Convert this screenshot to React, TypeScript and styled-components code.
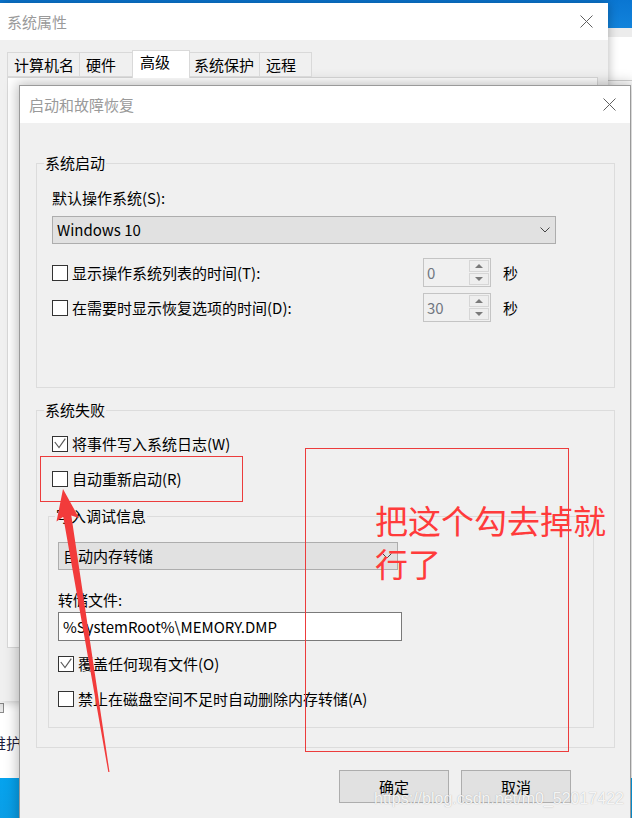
import React from "react";
import styled, { createGlobalStyle } from "styled-components";

const FONT = `"Noto Sans CJK SC", "Noto Sans", sans-serif`;

const GlobalStyle = createGlobalStyle`
  html, body { margin: 0; padding: 0; }
  body {
    width: 632px;
    height: 818px;
    overflow: hidden;
    background: #ffffff;
    font-family: ${FONT};
    color: #000;
  }
  * { box-sizing: border-box; }
`;

/* ---------- desktop ---------- */
const Desktop = styled.div`
  position: relative;
  width: 632px;
  height: 818px;
  overflow: hidden;
  display: flex;
  flex-direction: column;
  font-family: ${FONT};
`;
const TopBand = styled.div`
  height: 28px;
  background: linear-gradient(180deg, #0a76d2, #1283db);
`;
const DesktopMiddle = styled.div`
  flex: 1;
  background: #ffffff;
`;
const Taskbar = styled.div`
  height: 40px;
  background: linear-gradient(180deg, #05a3ee, #0b9ee6);
`;
const BackWindowRight = styled.div`
  position: absolute;
  left: 600px;
  top: 28px;
  width: 80px;
  height: 750px;
  background: #ffffff;
  border-top: 9px solid #ececec;
`;
const BackRule = styled.div`
  margin-top: 43px;
  height: 1px;
  background: #d2d2d2;
`;
const BackWindowLeft = styled.div`
  position: absolute;
  left: -60px;
  top: 701px;
  width: 300px;
  height: 77px;
  background: #ffffff;
  display: flex;
  flex-direction: column;
  padding-left: 6px;
`;
const BackIcon = styled.div`
  margin: 2px 0 0 46px;
  width: 12px;
  height: 10px;
  border: 1px solid #8a8a8a;
  background: #e8e8e8;
`;
const BackText = styled.div`
  margin-top: 20px;
  font-size: 15px;
  line-height: 20px;
  color: #1c1c3c;
`;

/* ---------- outer window ---------- */
const OuterWindow = styled.div`
  position: absolute;
  left: 0;
  top: 3px;
  width: 608px;
  height: 698px;
  background: #f0f0f0;
  box-shadow: 0 0 10px rgba(0, 0, 0, 0.3);
  display: flex;
  flex-direction: column;
`;
const TitleBar = styled.div<{ $pl: number }>`
  height: 37px;
  flex: none;
  background: #ffffff;
  display: flex;
  align-items: center;
  justify-content: space-between;
  padding-left: ${(p) => p.$pl}px;
`;
const TitleText = styled.span`
  font-size: 15px;
  line-height: 20px;
  color: #9a9a9a;
`;
const CloseBox = styled.span<{ $mr: number }>`
  display: flex;
  margin-right: ${(p) => p.$mr}px;
`;
const OuterBody = styled.div`
  padding: 10px 0 0 7px;
`;
const TabStrip = styled.div`
  height: 28px;
  display: flex;
  align-items: flex-end;
  position: relative;
  z-index: 1;
`;
const Tab = styled.div<{ $w: number; $pl: number; $active?: boolean }>`
  width: ${(p) => p.$w}px;
  height: ${(p) => (p.$active ? 28 : 25)}px;
  margin-bottom: ${(p) => (p.$active ? 0 : 1)}px;
  margin-left: -1px;
  &:first-child { margin-left: 0; }
  border: 1px solid #d9d9d9;
  border-bottom: ${(p) => (p.$active ? "none" : "1px solid #d9d9d9")};
  background: ${(p) => (p.$active ? "#ffffff" : "#f0f0f0")};
  position: relative;
  z-index: ${(p) => (p.$active ? 2 : 1)};
  padding-left: ${(p) => p.$pl - 1}px;
  padding-top: ${(p) => (p.$active ? 1 : 2)}px;
  font-size: 15px;
  line-height: 20px;
  white-space: nowrap;
`;
const TabPanel = styled.div`
  margin-top: -1px;
  width: 591px;
  height: 571px;
  background: #ffffff;
  border: 1px solid #d9d9d9;
`;

/* ---------- inner dialog ---------- */
const InnerDialog = styled.div`
  position: absolute;
  left: 19px;
  top: 85px;
  width: 612px;
  height: 760px;
  background: #f0f0f0;
  border: 1px solid #9a9a9a;
  box-shadow: 0 0 12px 2px rgba(0, 0, 0, 0.25);
  display: flex;
  flex-direction: column;
`;
const DialogBody = styled.div`
  padding: 30px 15px 0 16px;
  display: flex;
  flex-direction: column;
`;
const Group = styled.fieldset<{ $mt: number; $pb: number }>`
  margin: ${(p) => p.$mt}px 0 0 0;
  padding: 0 15px ${(p) => p.$pb}px 15px;
  border: 1px solid #dcdcdc;
  min-width: 0;
`;
const SubGroup = styled.fieldset`
  margin: 15px 5px 0 -4px;
  padding: 0 9px 16px 9px;
  border: 1px solid #dcdcdc;
  min-width: 0;
`;
const Legend = styled.legend<{ $ml: number }>`
  margin-left: ${(p) => p.$ml}px;
  padding: 0 1px;
  font-size: 15px;
  line-height: 20px;
`;
const FieldLabel = styled.div<{ $mt: number }>`
  margin-top: ${(p) => p.$mt}px;
  font-size: 15px;
  line-height: 20px;
`;
const Combo = styled.div<{ $w: number; $mt: number }>`
  margin-top: ${(p) => p.$mt}px;
  width: ${(p) => p.$w}px;
  height: 28px;
  background: #e1e1e1;
  border: 1px solid #adadad;
  display: flex;
  align-items: center;
  justify-content: space-between;
  padding: 0 5px 0 4px;
  font-size: 15px;
  line-height: 20px;
`;
const TextInput = styled.div<{ $w: number }>`
  margin-top: 2px;
  width: ${(p) => p.$w}px;
  height: 29px;
  background: #ffffff;
  border: 1px solid #7a7a7a;
  display: flex;
  align-items: center;
  padding-left: 4px;
  font-size: 15px;
  line-height: 20px;
`;
const CheckRow = styled.div<{ $mt: number }>`
  margin-top: ${(p) => p.$mt}px;
  height: 24px;
  display: flex;
  align-items: center;
  gap: 4px;
  font-size: 15px;
  line-height: 20px;
  white-space: nowrap;
`;
const SpinRow = styled.div<{ $mt: number }>`
  margin-top: ${(p) => p.$mt}px;
  height: 29px;
  display: grid;
  grid-template-columns: 371px 68px auto;
  align-items: center;
`;
const Box = styled.span`
  width: 16px;
  height: 16px;
  flex: none;
  border: 1px solid #333333;
  background: #ffffff;
  display: flex;
`;
const Spin = styled.div`
  width: 68px;
  height: 29px;
  border: 1px solid #c4c4c4;
  background: #f0f0f0;
  display: flex;
`;
const SpinValue = styled.div`
  flex: 1;
  padding-left: 3px;
  font-size: 15px;
  line-height: 27px;
  color: #717780;
`;
const SpinButtons = styled.div`
  width: 21px;
  display: flex;
  flex-direction: column;
  gap: 1px;
  padding: 1px 1px 1px 0;
`;
const SpinButton = styled.div`
  flex: 1;
  border: 1px solid #d6d6d6;
  background: #eeeeee;
  display: flex;
  align-items: center;
  justify-content: center;
`;
const Unit = styled.span`
  margin-left: 12px;
  font-size: 15px;
  line-height: 20px;
`;
const ButtonRow = styled.div`
  margin: 22px 44px 0 0;
  display: flex;
  justify-content: flex-end;
  gap: 12px;
`;
const Button = styled.div`
  width: 110px;
  height: 33px;
  border: 1px solid #adadad;
  background: #e1e1e1;
  display: flex;
  align-items: center;
  justify-content: center;
  font-size: 15px;
  line-height: 20px;
`;

/* ---------- annotations ---------- */
const Overlay = styled.div`
  position: absolute;
  inset: 0;
  pointer-events: none;
  z-index: 10;
`;
const MarkLayer = styled.svg`
  position: absolute;
  left: 0;
  top: 0;
`;
const Note = styled.div`
  position: absolute;
  left: 375px;
  top: 499px;
  width: 250px;
  font-size: 33px;
  line-height: 43px;
  color: #ff3b3b;
  font-family: ${FONT};
`;
const Watermark = styled.div`
  position: absolute;
  left: 374px;
  top: 789px;
  font-family: "Liberation Sans", Arial, sans-serif;
  font-size: 16px;
  line-height: 20px;
  color: rgba(255, 255, 255, 0.9);
  text-shadow: 0 0 1px rgba(110, 110, 110, 0.55);
  white-space: nowrap;
`;

/* ---------- small drawings ---------- */
const CloseIcon = () => (
  <svg width="13" height="13" viewBox="0 0 13 13">
    <path d="M0.5 0.5L12.5 12.5M12.5 0.5L0.5 12.5" stroke="#606060" strokeWidth="1" />
  </svg>
);
const Chevron = () => (
  <svg width="10" height="6" viewBox="0 0 10 6">
    <polyline points="0.5,0.5 5,5 9.5,0.5" fill="none" stroke="#444" strokeWidth="1" />
  </svg>
);
const Tri = ({ up }: { up?: boolean }) => (
  <svg width="8" height="4" viewBox="0 0 8 4">
    <polygon points={up ? "0,4 8,4 4,0" : "0,0 8,0 4,4"} fill="#7a7a7a" />
  </svg>
);

const Check = ({ checked }: { checked?: boolean }) => (
  <Box>
    {checked && (
      <svg width="14" height="14" viewBox="0 0 14 14">
        <polyline points="1.8,5 6,10.6 12.3,1.6" fill="none" stroke="#5a5a5a" strokeWidth="1.2" />
      </svg>
    )}
  </Box>
);

const SpinBox = ({ value }: { value: string }) => (
  <Spin>
    <SpinValue>{value}</SpinValue>
    <SpinButtons>
      <SpinButton>
        <Tri up />
      </SpinButton>
      <SpinButton>
        <Tri />
      </SpinButton>
    </SpinButtons>
  </Spin>
);

const tabs = [
  { label: "计算机名", w: 73, pl: 7 },
  { label: "硬件", w: 54, pl: 7 },
  { label: "高级", w: 58, pl: 8, active: true },
  { label: "系统保护", w: 71, pl: 5 },
  { label: "远程", w: 53, pl: 7 },
];

export default function App() {
  return (
    <>
      <GlobalStyle />
      <Desktop>
        <TopBand />
        <DesktopMiddle />
        <Taskbar />

        <BackWindowRight>
          <BackRule />
        </BackWindowRight>
        <BackWindowLeft>
          <BackIcon />
          <BackText>安全和维护</BackText>
        </BackWindowLeft>

        <OuterWindow>
          <TitleBar $pl={7}>
            <TitleText>系统属性</TitleText>
            <CloseBox $mr={15}>
              <CloseIcon />
            </CloseBox>
          </TitleBar>
          <OuterBody>
            <TabStrip>
              {tabs.map((t) => (
                <Tab key={t.label} $w={t.w} $pl={t.pl} $active={t.active}>
                  {t.label}
                </Tab>
              ))}
            </TabStrip>
            <TabPanel />
          </OuterBody>
        </OuterWindow>

        <InnerDialog>
          <TitleBar $pl={9}>
            <TitleText>启动和故障恢复</TitleText>
            <CloseBox $mr={14}>
              <CloseIcon />
            </CloseBox>
          </TitleBar>
          <DialogBody>
            <Group $mt={0} $pb={65}>
              <Legend $ml={-8}>系统启动</Legend>
              <FieldLabel $mt={15}>默认操作系统(S):</FieldLabel>
              <Combo $w={504} $mt={8}>
                <span>Windows 10</span>
                <Chevron />
              </Combo>
              <SpinRow $mt={14}>
                <CheckRow $mt={0}>
                  <Check />
                  <span>显示操作系统列表的时间(T):</span>
                </CheckRow>
                <SpinBox value="0" />
                <Unit>秒</Unit>
              </SpinRow>
              <SpinRow $mt={6}>
                <CheckRow $mt={0}>
                  <Check />
                  <span>在需要时显示恢复选项的时间(D):</span>
                </CheckRow>
                <SpinBox value="30" />
                <Unit>秒</Unit>
              </SpinRow>
            </Group>

            <Group $mt={12} $pb={19}>
              <Legend $ml={-8}>系统失败</Legend>
              <CheckRow $mt={12}>
                <Check checked />
                <span>将事件写入系统日志(W)</span>
              </CheckRow>
              <CheckRow $mt={11}>
                <Check />
                <span>自动重新启动(R)</span>
              </CheckRow>
              <SubGroup>
                <Legend $ml={-3}>写入调试信息</Legend>
                <Combo $w={340} $mt={16}>
                  <span>自动内存转储</span>
                  <Chevron />
                </Combo>
                <FieldLabel $mt={20}>转储文件:</FieldLabel>
                <TextInput $w={344}>%SystemRoot%\MEMORY.DMP</TextInput>
                <CheckRow $mt={11}>
                  <Check checked />
                  <span>覆盖任何现有文件(O)</span>
                </CheckRow>
                <CheckRow $mt={11}>
                  <Check />
                  <span>禁止在磁盘空间不足时自动删除内存转储(A)</span>
                </CheckRow>
              </SubGroup>
            </Group>

            <ButtonRow>
              <Button>确定</Button>
              <Button>取消</Button>
            </ButtonRow>
          </DialogBody>
        </InnerDialog>

        <Overlay>
          <MarkLayer width="632" height="818" viewBox="0 0 632 818">
            <rect x="40.5" y="456.5" width="202" height="45" fill="none" stroke="#ec3c3c" strokeWidth="1" />
            <rect x="305.5" y="448.5" width="263" height="303" fill="none" stroke="#ec3c3c" strokeWidth="1" />
            <polygon
              points="63,489 79,518 71.3,515.4 109.5,772 108.3,772 63.2,516.8 56.5,521.6"
              fill="#f23b3b"
            />
          </MarkLayer>
          <Note>
            把这个勾去掉就
            <br />
            行了
          </Note>
          <Watermark>https://blog.csdn.net/m0_52017422</Watermark>
        </Overlay>
      </Desktop>
    </>
  );
}
